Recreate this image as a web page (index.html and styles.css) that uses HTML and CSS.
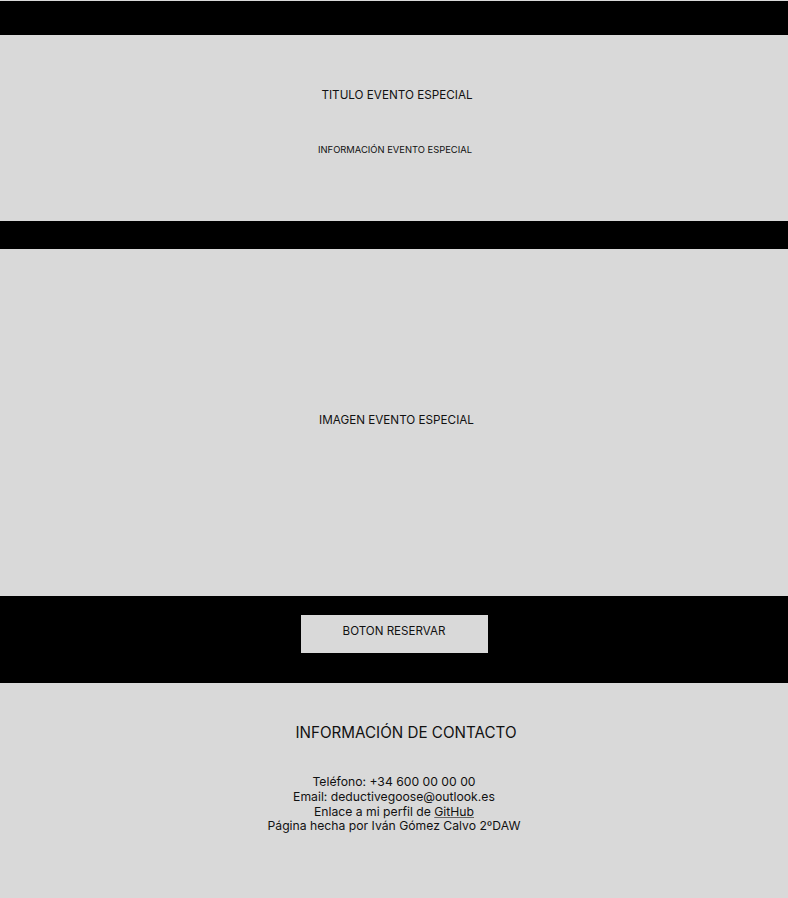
FILE: index.html
```html
<!DOCTYPE html>
<html lang="es">
<head>
<meta charset="utf-8">
<title>Evento especial</title>
<link rel="stylesheet" href="styles.css">
</head>
<body>
<header class="topbar"></header>
<section class="evento">
  <h1 class="evento-titulo">TITULO EVENTO ESPECIAL</h1>
  <p class="evento-info">INFORMACIÓN EVENTO ESPECIAL</p>
</section>
<div class="separador"></div>
<section class="imagen">
  <p class="imagen-texto">IMAGEN EVENTO ESPECIAL</p>
</section>
<section class="reserva">
  <button class="boton">BOTON RESERVAR</button>
</section>
<footer class="contacto">
  <h2 class="contacto-titulo">INFORMACIÓN DE CONTACTO</h2>
  <div class="contacto-lineas">
    <p>Teléfono: +34 600 00 00 00</p>
    <p>Email: deductivegoose@outlook.es</p>
    <p>Enlace a mi perfil de <a href="#">GitHub</a></p>
    <p>Página hecha por Iván Gómez Calvo 2ºDAW</p>
  </div>
</footer>
</body>
</html>
```

FILE: styles.css
```css
* { box-sizing: border-box; }
html, body { margin: 0; padding: 0; }
body {
  background: #d9d9d9;
  font-family: Inter, "Liberation Sans", sans-serif;
  color: #111;
  padding-top: 1px;
}
.topbar { height: 34px; background: #000; }
.evento {
  height: 186px;
  display: flex;
  flex-direction: column;
  align-items: center;
  padding-top: 52px;
}
.evento-titulo {
  margin: 0;
  padding-left: 6px;
  font-size: 11.7px;
  font-weight: 400;
  line-height: 16px;
}
.evento-info {
  margin: 41px 0 0;
  padding-left: 2px;
  font-size: 9.4px;
  line-height: 12px;
}
.separador { height: 28px; background: #000; }
.imagen {
  height: 347px;
  display: flex;
  align-items: center;
  justify-content: center;
  padding-bottom: 6px;
}
.imagen-texto {
  margin: 0;
  padding-left: 5px;
  font-size: 11.7px;
  line-height: 16px;
}
.reserva {
  height: 87px;
  background: #000;
  display: flex;
  justify-content: center;
  padding-top: 19px;
}
.boton {
  width: 187px;
  height: 38px;
  background: #d9d9d9;
  border: none;
  font-family: Inter, "Liberation Sans", sans-serif;
  font-size: 11.6px;
  color: #111;
  padding: 9px 0 0;
  display: flex;
  justify-content: center;
  align-items: flex-start;
  line-height: 15px;
}
.contacto {
  height: 215px;
  display: flex;
  flex-direction: column;
  align-items: center;
  padding-top: 40px;
}
.contacto-titulo {
  margin: 0;
  padding-left: 24px;
  font-size: 15.2px;
  font-weight: 400;
  line-height: 20px;
}
.contacto-lineas {
  margin-top: 32px;
  text-align: center;
  font-size: 12.2px;
  line-height: 14.8px;
}
.contacto-lineas p { margin: 0; }
.contacto-lineas a {
  color: inherit;
  text-decoration: underline;
  text-decoration-color: #666;
}
```
